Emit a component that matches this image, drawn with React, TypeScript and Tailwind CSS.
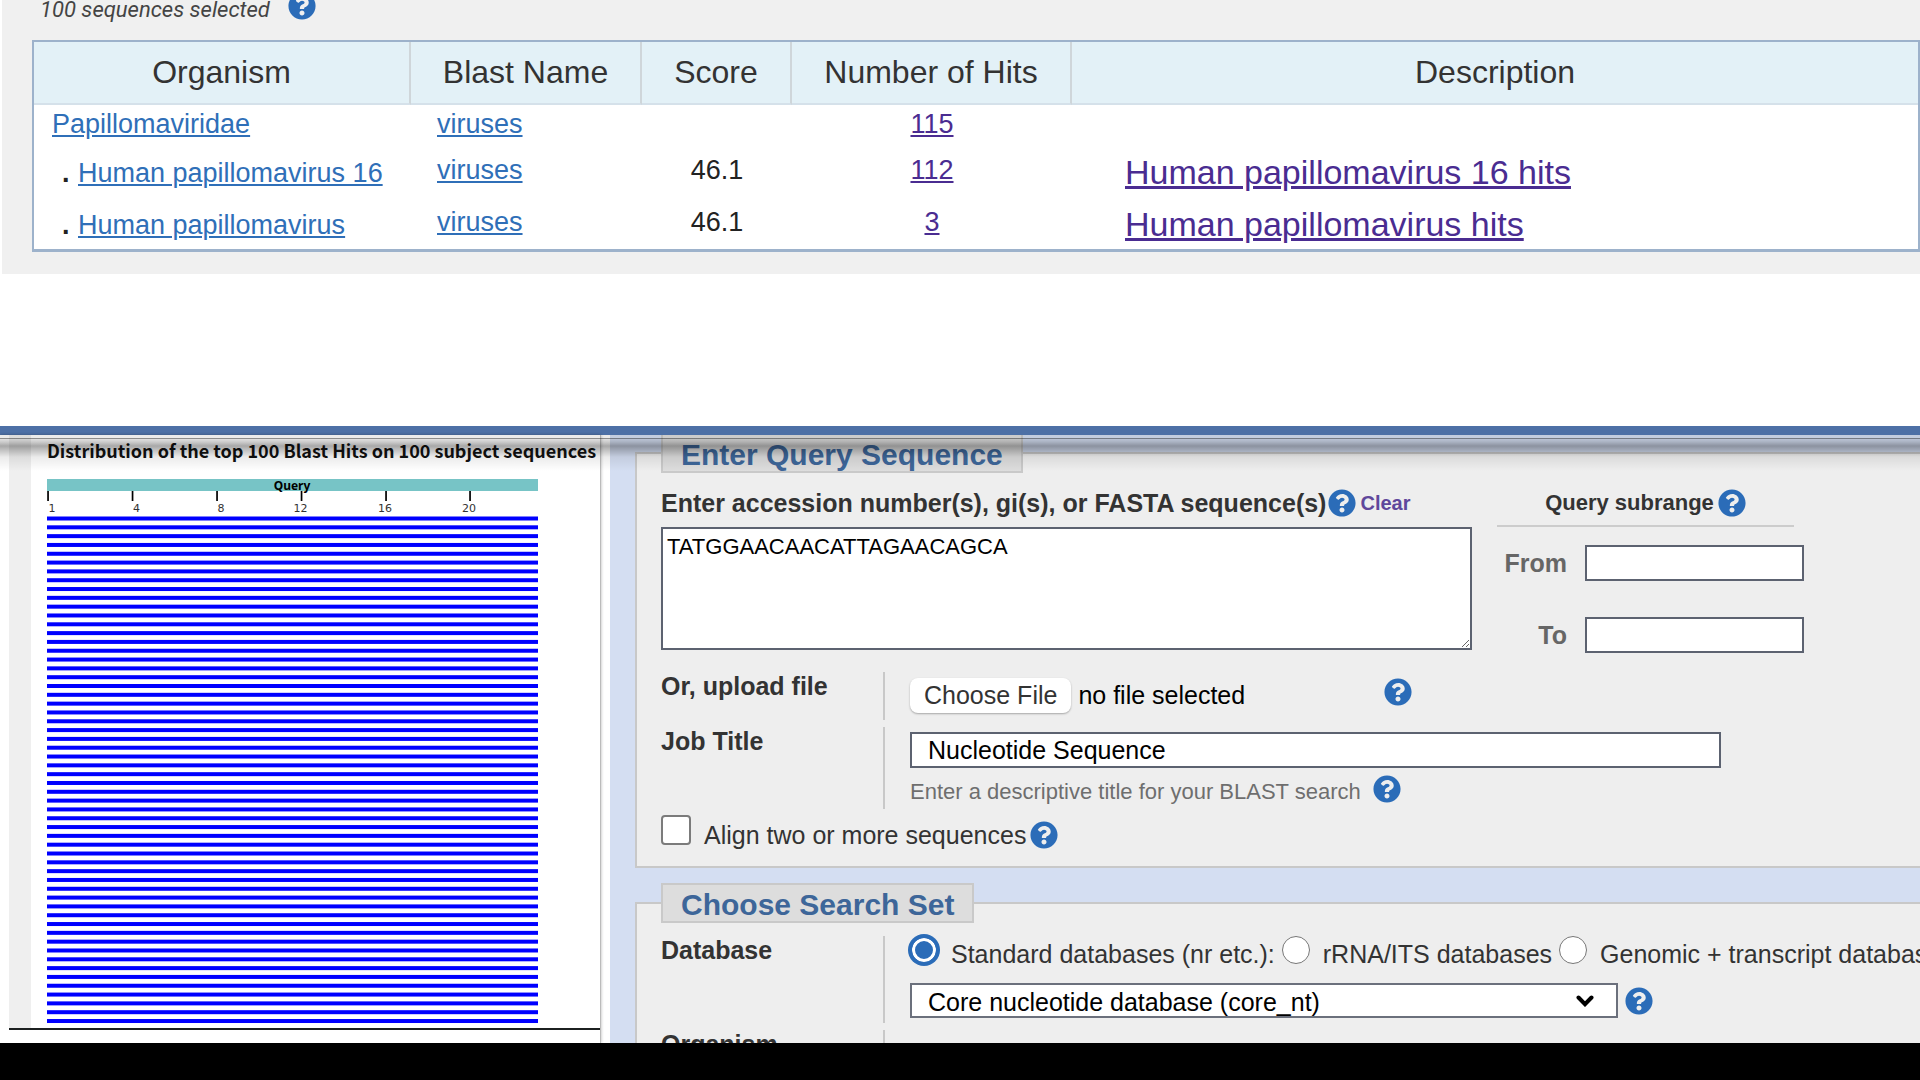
import { useId, useState } from "react";
import type { ReactNode } from "react";
import { FaQuestionCircle } from "react-icons/fa";

type Hit = {
  organism: string;
  blastName: string;
  score?: string;
  hits: number;
  description?: string;
  nested: boolean;
};

const HITS: Hit[] = [
  { organism: "Papillomaviridae", blastName: "viruses", hits: 115, nested: false },
  {
    organism: "Human papillomavirus 16",
    blastName: "viruses",
    score: "46.1",
    hits: 112,
    description: "Human papillomavirus 16 hits",
    nested: true,
  },
  {
    organism: "Human papillomavirus",
    blastName: "viruses",
    score: "46.1",
    hits: 3,
    description: "Human papillomavirus hits",
    nested: true,
  },
];

const TICKS = [
  { x: 1, label: "1", labelX: 5 },
  { x: 85.5, label: "4", labelX: 89.5 },
  { x: 170, label: "8", labelX: 174 },
  { x: 254.5, label: "12", labelX: 253.5 },
  { x: 339, label: "16", labelX: 338 },
  { x: 423, label: "20", labelX: 422 },
];

const BAR_COUNT = 58;

function Help({ topic }: { topic: string }) {
  return (
    <button type="button" aria-label={`Help: ${topic}`} className="size-7 shrink-0 text-[#2b6cb8]">
      <FaQuestionCircle className="size-full" />
    </button>
  );
}

function TaxonomyPanel() {
  return (
    <section className="overflow-hidden border-b-[9px] border-[#4d70a6] bg-white pb-[152px] pl-0.5">
      <div className="bg-[#f0f0f0] pb-[22px] pl-[30px]">
        <div className="-mt-2 flex h-9 items-start gap-[18px] pl-2">
          <span className="font-['Roboto',sans-serif] text-[22px] leading-9 text-[#444] italic">
            100 sequences selected
          </span>
          <Help topic="selected sequences" />
        </div>
        <table className="mt-3 w-full border-separate border-spacing-0 border-2 border-b-[3px] border-[#9db2cb] bg-white text-[27px] leading-[38px] text-[#222]">
          <colgroup>
            <col className="w-[377px]" />
            <col className="w-[231px]" />
            <col className="w-[150px]" />
            <col className="w-[280px]" />
            <col />
          </colgroup>
          <thead>
            <tr className="bg-[#e3f1f7] text-[32px] leading-[61px] text-[#333]">
              {["Organism", "Blast Name", "Score", "Number of Hits", "Description"].map((name) => (
                <th
                  key={name}
                  scope="col"
                  className="border-r-2 border-b-2 border-r-[#cfd6da] border-b-[#d5e1ea] text-center font-normal last:border-r-0"
                >
                  {name}
                </th>
              ))}
            </tr>
          </thead>
          <tbody className="align-top">
            {HITS.map((hit) => (
              <tr key={hit.organism} className="h-[46px] nth-[2]:h-[52px]">
                {hit.nested ? (
                  <td className="pl-7 leading-[44px]">
                    <div className="flex">
                      <span className="w-4 font-bold">.</span>
                      <a href="#organism" className="text-[#2f6fb8] underline">
                        {hit.organism}
                      </a>
                    </div>
                  </td>
                ) : (
                  <td className="pl-[18px]">
                    <a href="#organism" className="text-[#2f6fb8] underline">
                      {hit.organism}
                    </a>
                  </td>
                )}
                <td className="pl-[26px]">
                  <a href="#blast-name" className="text-[#2f6fb8] underline">
                    {hit.blastName}
                  </a>
                </td>
                <td className="text-center">{hit.score}</td>
                <td className="text-center">
                  <a href="#hits" className="text-[#4a2c91] underline">
                    {hit.hits}
                  </a>
                </td>
                <td className="pl-[53px] text-[34px] leading-[43px]">
                  {hit.description && (
                    <a href="#description" className="text-[#4a2c91] underline">
                      {hit.description}
                    </a>
                  )}
                </td>
              </tr>
            ))}
          </tbody>
        </table>
      </div>
    </section>
  );
}

function HitsChart() {
  return (
    <svg viewBox="0 0 491 549" className="mt-[14px] block h-[549px] w-[491px]" role="img" aria-label="Blast hits by query position">
      <rect x="0" y="0" width="491" height="12" fill="#77c4c6" />
      <text x="245" y="10.5" textAnchor="middle" fontSize="12" fontWeight="700" fontFamily="Noto Sans" fill="#000">
        Query
      </text>
      {TICKS.map((tick) => (
        <g key={tick.label}>
          <rect x={tick.x - 0.8} y="12" width="1.7" height="10" fill="#000" />
          <text x={tick.labelX} y="33" textAnchor="middle" fontSize="11" fontFamily="DejaVu Sans" fill="#333">
            {tick.label}
          </text>
        </g>
      ))}
      {Array.from({ length: BAR_COUNT }, (_, i) => (
        <rect key={i} x="0" y={37.5 + i * 8.816} width="491" height="4" fill="#0000ff" />
      ))}
    </svg>
  );
}

function DistributionPanel() {
  return (
    <section className="w-[601px] shrink-0 border-r border-[#bbb] bg-white pb-[13px] pl-[9px] shadow-[0_0_3px_rgba(0,0,0,0.3)]">
      <div className="flex border-b-2 border-[#1c2020]">
        <div className="w-[22px] shrink-0 bg-[#efefef]" />
        <div className="pl-4">
          <h2 className="font-['Noto_Sans_CJK_JP',sans-serif] text-[18px] leading-[30px] font-bold whitespace-nowrap text-[#111]">
            Distribution of the top 100 Blast Hits on 100 subject sequences
          </h2>
          <HitsChart />
        </div>
      </div>
    </section>
  );
}

function FormGroup({ title, children }: { title: string; children: ReactNode }) {
  return (
    <fieldset className="min-w-0 border-2 border-r-0 border-[#c8c8c8] bg-[#eee] pl-6">
      <legend className="border-2 border-[#c9c9c9] bg-[#ddd] px-[18px] pt-[3px] text-[30px] leading-[33px] font-bold text-[#3d6699]">
        {title}
      </legend>
      {children}
    </fieldset>
  );
}

function FormRow({ label, htmlFor, children }: { label: string; htmlFor?: string; children?: ReactNode }) {
  return (
    <div className="mt-[7px] grid grid-cols-[222px_minmax(0,1fr)]">
      <label htmlFor={htmlFor} className="leading-7 font-bold">
        {label}
      </label>
      <div className="border-l-2 border-[#c8c8c8] pl-[25px]">{children}</div>
    </div>
  );
}

function DatabaseOption({ label, selected, onSelect }: { label: string; selected: boolean; onSelect: () => void }) {
  return (
    <label className="flex items-start gap-[13px] whitespace-nowrap">
      <input
        type="radio"
        name="database"
        checked={selected}
        onChange={onSelect}
        className="size-7 shrink-0 appearance-none rounded-full border border-[#777] bg-white checked:border-2 checked:border-[#2b6cb8] checked:bg-[#2b6cb8] checked:shadow-[inset_0_0_0_3px_white] checked:ring-2 checked:ring-[#2b6cb8]"
      />
      <span>{label}</span>
    </label>
  );
}

function RangeField({ label }: { label: string }) {
  const id = useId();
  return (
    <div className="flex gap-[18px]">
      <label htmlFor={id} className="w-[70px] text-right font-bold text-[#666]">
        {label}
      </label>
      <input id={id} type="text" className="h-9 w-[219px] border-2 border-[#5c6270] bg-white px-2 text-black" />
    </div>
  );
}

const DATABASES = ["Standard databases (nr etc.):", "rRNA/ITS databases", "Genomic + transcript databases"];

function SearchForm() {
  const [database, setDatabase] = useState(DATABASES[0]);
  return (
    <form className="min-w-0 flex-1 overflow-hidden bg-[#d4def2] pl-[25px] text-[25px] leading-9 text-[#333] [contain:size]">
      <div className="-mt-0.5 flex flex-col gap-[15px]">
        <FormGroup title="Enter Query Sequence">
          <div className="flex gap-[25px] pt-3">
            <div className="w-[811px] shrink-0">
              <div className="flex items-center">
                <label htmlFor="query" className="pr-0.5 font-bold whitespace-nowrap">
                  Enter accession number(s), gi(s), or FASTA sequence(s)
                </label>
                <Help topic="query sequence" />
                <a href="#clear" className="pl-1 text-[20px] font-bold text-[#5f479b]">
                  Clear
                </a>
              </div>
              <textarea
                id="query"
                defaultValue="TATGGAACAACATTAGAACAGCA"
                className="mt-1.5 block h-[123px] w-full resize border-2 border-[#5c6270] bg-white px-1 py-0.5 text-[22px] leading-8 text-black"
              />
            </div>
            <div>
              <div className="flex w-[297px] items-center justify-center gap-1 border-b-2 border-[#ccc] pb-1 text-[22px] font-bold">
                <span>Query subrange</span>
                <Help topic="query subrange" />
              </div>
              <div className="mt-[18px] flex flex-col gap-9">
                <RangeField label="From" />
                <RangeField label="To" />
              </div>
            </div>
          </div>

          <div className="pt-3">
            <FormRow label="Or, upload file" htmlFor="upload">
              <div className="flex h-12 pt-1.5">
                <div className="flex w-[474px] gap-[7px] leading-[35px]">
                  <input id="upload" type="file" className="sr-only" />
                  <label
                    htmlFor="upload"
                    className="h-[35px] rounded-lg bg-white px-[14px] shadow-[0_1px_2px_rgba(0,0,0,0.3)]"
                  >
                    Choose File
                  </label>
                  <span className="text-black">no file selected</span>
                </div>
                <Help topic="file upload" />
              </div>
            </FormRow>
            <FormRow label="Job Title" htmlFor="job-title">
              <div className="pt-[5px]">
                <input
                  id="job-title"
                  type="text"
                  defaultValue="Nucleotide Sequence"
                  className="block h-9 w-[811px] border-2 border-[#5c6270] bg-white px-4 text-black"
                />
                <div className="flex gap-3 pt-[7px] text-[22px] leading-[34px] text-[#6e6e6e]">
                  <span>Enter a descriptive title for your BLAST search</span>
                  <Help topic="job title" />
                </div>
              </div>
            </FormRow>
          </div>

          <div className="flex items-center gap-1 pt-1.5 pb-[11px]">
            <label className="flex gap-[13px] leading-10">
              <input
                type="checkbox"
                className="size-[30px] appearance-none rounded border-2 border-[#7b7b7b] bg-white checked:bg-[#2b6cb8]"
              />
              <span>Align two or more sequences</span>
            </label>
            <Help topic="align sequences" />
          </div>
        </FormGroup>

        <FormGroup title="Choose Search Set">
          <div className="pt-1.5">
            <FormRow label="Database" htmlFor="database-name">
              <div className="flex gap-[7px]">
                {DATABASES.map((name) => (
                  <DatabaseOption key={name} label={name} selected={database === name} onSelect={() => setDatabase(name)} />
                ))}
              </div>
              <div className="flex items-center gap-[7px] pt-[11px] pb-[5px]">
                <div className="relative w-[708px]">
                  <select
                    id="database-name"
                    className="block h-[35px] w-full appearance-none border-2 border-[#6b707c] bg-white px-4 pt-[3px] leading-7 text-black"
                  >
                    <option>Core nucleotide database (core_nt)</option>
                  </select>
                  <svg
                    viewBox="0 0 18 12"
                    className="pointer-events-none absolute top-3 right-6 h-3 w-[18px]"
                    fill="none"
                    stroke="#000"
                    strokeWidth="4"
                    strokeLinecap="round"
                    strokeLinejoin="miter"
                    aria-hidden="true"
                  >
                    <path d="M2.5 2.5 9 9.2 15.5 2.5" />
                  </svg>
                </div>
                <Help topic="database" />
              </div>
            </FormRow>
            <FormRow label="Organism" htmlFor="organism-name">
              <input id="organism-name" type="text" className="mt-9 block h-9 w-[708px] border-2 border-[#5c6270] bg-white px-4" />
            </FormRow>
          </div>
        </FormGroup>
      </div>
    </form>
  );
}

export default function App() {
  return (
    <div className="min-h-screen bg-black font-['Liberation_Sans',Arial,sans-serif]">
      <TaxonomyPanel />
      <div className="relative flex gap-[9px] bg-white">
        <DistributionPanel />
        <SearchForm />
        <div className="pointer-events-none absolute inset-x-0 top-0 h-9 bg-[linear-gradient(to_bottom,rgba(0,0,0,0.08)_0px,rgba(0,0,0,0.08)_3px,rgba(0,0,0,0.45)_3px,rgba(0,0,0,0.45)_4px,rgba(0,0,0,0.12)_4px,rgba(0,0,0,0.2)_7px,rgba(0,0,0,0.34)_11px,rgba(0,0,0,0.22)_16px,rgba(0,0,0,0.08)_22px,rgba(0,0,0,0)_36px)]" />
      </div>
    </div>
  );
}
